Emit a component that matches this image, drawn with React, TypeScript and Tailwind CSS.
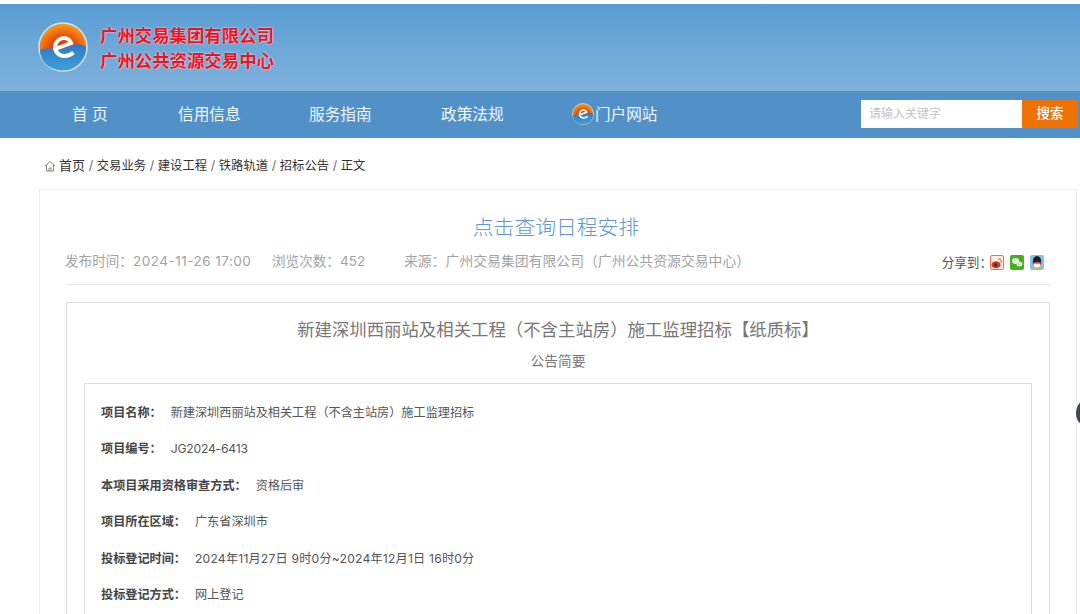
const FONT = "font-['Inter','Noto_Sans_CJK_SC','Noto_Sans',sans-serif]";

const NAV: string[] = ["信用信息", "服务指南", "政策法规"];
const CRUMBS: string[] = ["交易业务", "建设工程", "铁路轨道", "招标公告", "正文"];
const ROWS: { label: string; value: string; spacing?: string }[] = [
  { label: "项目名称：", value: "新建深圳西丽站及相关工程（不含主站房）施工监理招标" },
  { label: "项目编号：", value: "JG2024-6413", spacing: "tracking-[-0.2px]" },
  { label: "本项目采用资格审查方式：", value: "资格后审" },
  { label: "项目所在区域：", value: "广东省深圳市" },
  { label: "投标登记时间：", value: "2024年11月27日 9时0分~2024年12月1日 16时0分", spacing: "tracking-[0.2px]" },
  { label: "投标登记方式：", value: "网上登记" },
];

const Logo = ({ size, id }: { size: number; id: string }) => (
  <svg width={size} height={size} viewBox="0 0 50 50" className="shrink-0">
    <defs>
      <radialGradient id={`${id}-sun`} cx="0.5" cy="0.6" r="0.6">
        <stop offset="0" stopColor="#dd1c04" />
        <stop offset="0.55" stopColor="#ea5008" />
        <stop offset="1" stopColor="#f7a31e" />
      </radialGradient>
      <linearGradient id={`${id}-sea`} x1="0" y1="0" x2="0" y2="1">
        <stop offset="0" stopColor="#2f78c4" />
        <stop offset="1" stopColor="#3fa0d8" />
      </linearGradient>
    </defs>
    <circle cx="25" cy="25" r="24" fill={`url(#${id}-sun)`} stroke="#cfe3f2" strokeWidth="1.5" />
    <path
      d="M2 28 C12 24 20 29 29 25 C36 22 42 20 48 25 C48 38 38 48.300 25 48.300 C12 48.300 2 40 2 28 Z"
      fill={`url(#${id}-sea)`}
    />
    <path
      d="M17 27 L33 21 C31.500 16.500 27 15 23 16.500 C17.500 18.500 15.500 25.500 18.500 30 C22 35 30 35.500 35.500 30.500"
      fill="none"
      stroke="#fff"
      strokeWidth="4"
    />
  </svg>
);

const WeiboIcon = () => (
  <svg width="14" height="15" viewBox="0 0 14 15">
    <rect x="0.500" y="0.500" width="13" height="14" rx="1.500" fill="#fbeee6" stroke="#ef7350" />
    <ellipse cx="6" cy="9.800" rx="4.600" ry="3.600" fill="#d8352e" />
    <circle cx="5.500" cy="10" r="1.700" fill="#333" />
    <path d="M8 4 C10.500 3.500 12 5.500 11.300 8" fill="none" stroke="#ef8a2c" strokeWidth="1.300" />
  </svg>
);

const WechatIcon = () => (
  <svg width="14" height="15" viewBox="0 0 14 15">
    <rect width="14" height="15" rx="2" fill="#43b01c" />
    <ellipse cx="5.500" cy="6" rx="3.500" ry="3" fill="#eef8ea" />
    <ellipse cx="9.500" cy="9" rx="3" ry="2.500" fill="#d5eecb" />
  </svg>
);

const QqIcon = () => (
  <svg width="14" height="15" viewBox="0 0 14 15">
    <rect width="14" height="15" rx="2" fill="#7cc4ee" />
    <ellipse cx="7" cy="6.500" rx="4.200" ry="5.500" fill="#1c1c1c" />
    <ellipse cx="7" cy="9.800" rx="3.300" ry="3" fill="#fff" />
    <rect x="2.800" y="7" width="8.400" height="1.600" fill="#d9302a" />
    <ellipse cx="4.300" cy="13" rx="2.200" ry="1.100" fill="#f0b020" />
    <ellipse cx="9.700" cy="13" rx="2.200" ry="1.100" fill="#f0b020" />
  </svg>
);

export default function App() {
  return (
    <div className={`${FONT} relative h-[614px] w-[1080px] overflow-hidden bg-white`}>
      <div className="h-[4px] bg-white" />

      {/* Header */}
      <header className="flex h-[87px] items-center bg-gradient-to-b from-[#5a9dd3] to-[#7fb2dc] pb-[2px] pl-[38px]">
        <Logo size={50} id="main" />
        <div className="ml-[12px] mt-[4px] flex flex-col gap-px text-[17.400px] font-bold leading-[24px] text-[#f01020] [text-shadow:0_0_2px_#fff]">
          <span>广州交易集团有限公司</span>
          <span>广州公共资源交易中心</span>
        </div>
      </header>

      {/* Nav */}
      <nav className="flex h-[47px] items-center bg-[#5191c7] text-[15.700px] text-[#f2f7fb]">
        <span className="ml-[72px] w-[106px]">首 页</span>
        <span className="mr-[68px] w-[63px] whitespace-nowrap">{NAV[0]}</span>
        <span className="mr-[69px] w-[63px] whitespace-nowrap">{NAV[1]}</span>
        <span className="w-[63px] whitespace-nowrap">{NAV[2]}</span>
        <span className="ml-[68px] flex w-[289px] items-center">
          <Logo size={22} id="nav" />
          <span className="ml-px text-[15.600px]">门户网站</span>
        </span>
        <div className="mb-[2px] flex h-[28px] items-center">
          <span className="flex h-[28px] w-[161px] items-center bg-white pl-[8px] text-[12px] text-[#c4c4c4]">
            请输入关键字
          </span>
          <span className="flex h-[28px] w-[56px] items-center justify-center bg-[#ee7203] text-[13.500px] font-medium text-white">
            搜索
          </span>
        </div>
      </nav>

      {/* Breadcrumb */}
      <div className="flex h-[51px] items-center whitespace-pre pl-[44px] pt-[5px] text-[12.300px] text-[#333]">
        <svg width="12" height="12" viewBox="0 0 12 12" fill="none" stroke="#888" strokeWidth="1" className="mr-[3px]">
          <path d="M1 6 L6 1.500 L11 6 M2.500 5 V11 H9.500 V5 M5 11 V8 H7 V11" />
        </svg>
        <span className="text-[13px]">首页</span>
        {CRUMBS.map((crumb) => (
          <span key={crumb} className="flex items-center">
            <span className="w-[11.800px] text-center text-[#666]">/</span>
            {crumb}
          </span>
        ))}
      </div>

      {/* Article card */}
      <main className="ml-[39px] h-[500px] w-[1038px] border border-[#eeeeee] pl-[26px] pr-[26px]">
        <h1 className="mt-[23px] pr-[4px] text-center text-[20.800px] font-light leading-[30px] text-[#5f97cc]">
          点击查询日程安排
        </h1>
        <div className="-ml-px mt-[6px] flex h-[24px] items-center whitespace-nowrap text-[13.600px] text-[#a3a3a3]">
          <span className="w-[207px]">
            发布时间：<span className="tracking-[0.45px]">2024-11-26 17:00</span>
          </span>
          <span className="w-[132px]">浏览次数：452</span>
          <span className="text-[13.850px]">来源：广州交易集团有限公司（广州公共资源交易中心）</span>
          <span className="ml-auto mr-[6px] mt-[4px] flex items-center text-[12.600px] text-[#555]">
            分享到：
            <span className="-ml-[2px] flex gap-[6px]">
              <WeiboIcon />
              <WechatIcon />
              <QqIcon />
            </span>
          </span>
        </div>
        <div className="mt-[11px] h-px bg-[#e8e8e8]" />

        <section className="mt-[17px] border border-[#dddddd] px-[17px]">
          <h2 className="mt-[14px] whitespace-nowrap text-center text-[17.400px] font-normal leading-[26px] text-[#777]">
            新建深圳西丽站及相关工程（不含主站房）施工监理招标【纸质标】
          </h2>
          <p className="mt-[8px] text-center text-[13.700px] leading-[20px] text-[#777]">公告简要</p>
          <div className="mt-[12px] flex flex-col gap-[16.400px] border border-[#dddddd] px-[16px] pt-[19px] pb-[40px] text-[12.150px] leading-[20px] text-[#555]">
            {ROWS.map((row) => (
              <div key={row.label} className="flex whitespace-nowrap">
                <span className="mr-[9px] font-bold text-[#444]">{row.label}</span>
                <span className={row.spacing}>{row.value}</span>
              </div>
            ))}
          </div>
        </section>
      </main>

      {/* Floating button, cut off by the window edge */}
      <div className="absolute left-[1076px] top-[397px] h-[32px] w-[32px] rounded-full bg-[#41454f]" />
    </div>
  );
}
